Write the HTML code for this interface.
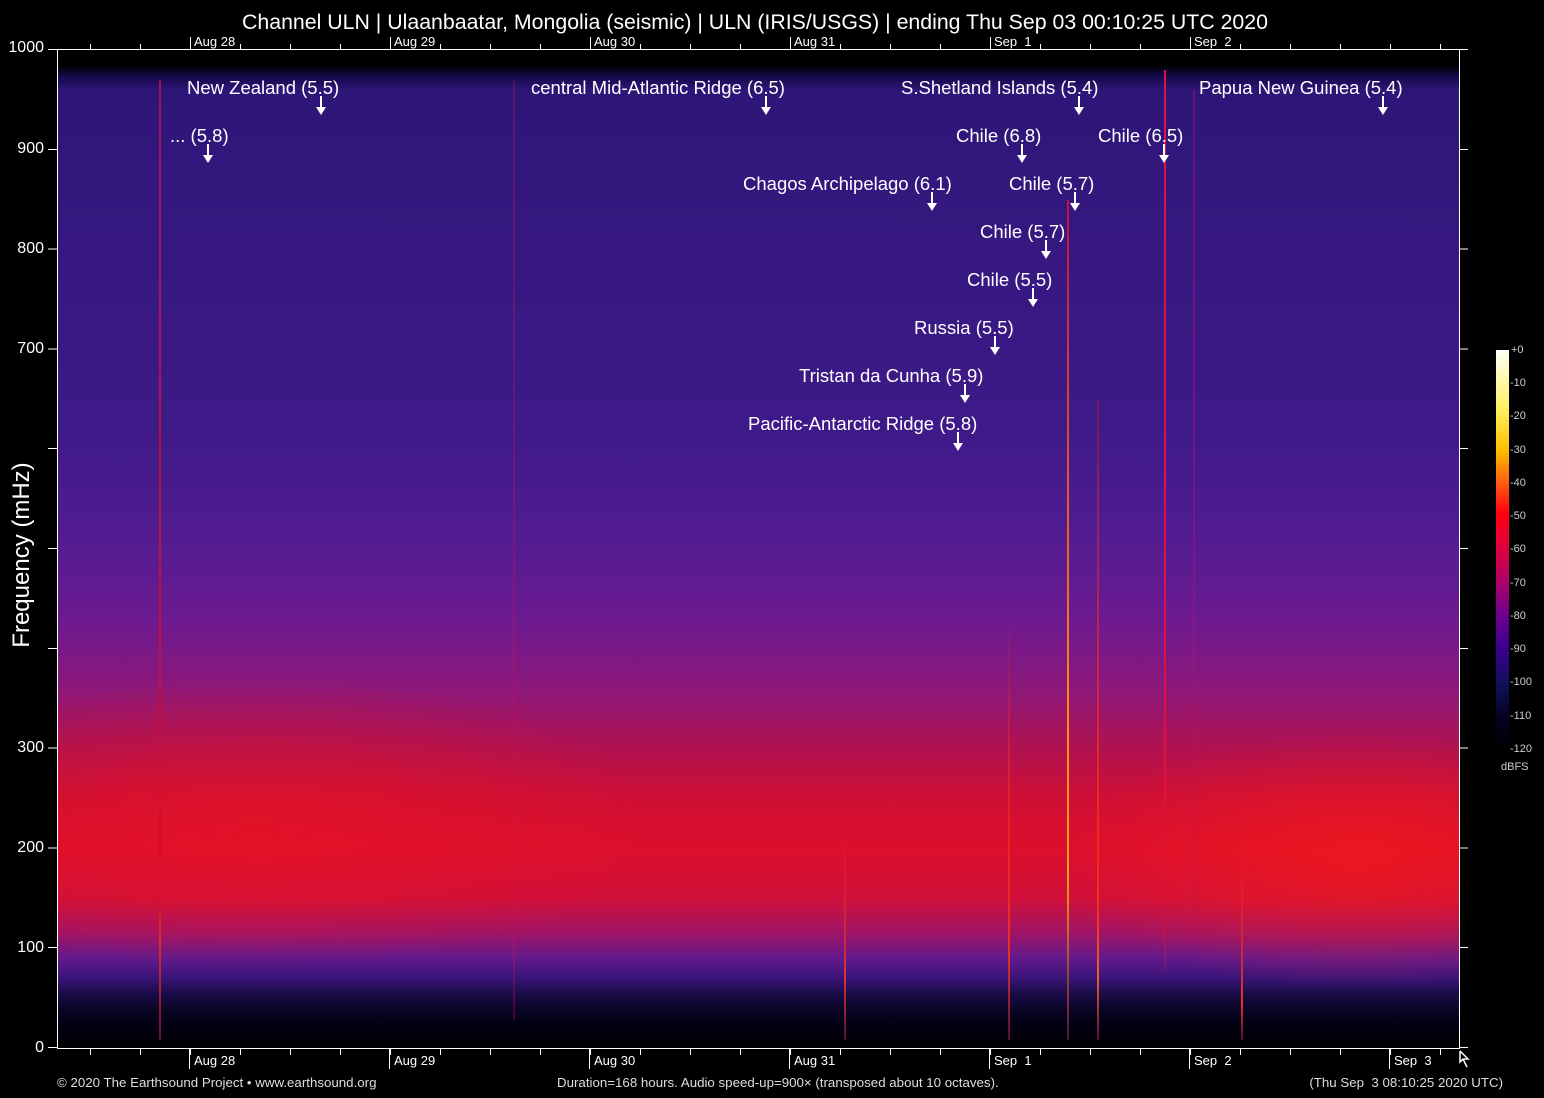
<!DOCTYPE html>
<html><head><meta charset="utf-8"><style>
*{margin:0;padding:0}
body{width:1544px;height:1098px;background:#000;position:relative;overflow:hidden;font-family:"Liberation Sans",Arial,sans-serif;color:#fff}
.a{position:absolute}
#plot{left:57px;top:49px;width:1401px;height:998px;border:1px solid #fff;overflow:hidden;
background:linear-gradient(to bottom,#000 0%,#000 1.5%,#14094a 2.6%,#2e1678 4%,#361880 20%,#3e1a88 38%,#501c90 48%,#6c1a90 57%,#8c187a 64%,#b01250 70%,#cf0f35 75%,#dc0f2c 80%,#d0103a 85%,#a01466 88.5%,#621a8c 91%,#3a1478 93%,#1c0c4a 94.5%,#0a0528 96%,#030114 97.5%,#000 100%)}
.ov{position:absolute}
.st{position:absolute;width:2px}
.an{position:absolute;font-size:18.5px;white-space:nowrap;line-height:20px}
.ar{position:absolute;width:2px;background:#fff}
.ar:after{content:"";position:absolute;left:-4px;bottom:-7px;border-left:5px solid transparent;border-right:5px solid transparent;border-top:8px solid #fff}
.yl{position:absolute;right:1500px;font-size:16px;text-align:right;line-height:16px}
.tl{position:absolute;font-size:13px;line-height:13px}
.cl{position:absolute;left:1510px;font-size:11px;color:#ccc;line-height:11px}
</style></head><body>
<div class="a" style="left:0;width:1510px;top:9px;text-align:center;font-size:21.3px;line-height:26px">Channel ULN | Ulaanbaatar, Mongolia (seismic) | ULN (IRIS/USGS) | ending Thu Sep 03 00:10:25 UTC 2020</div>

<div id="plot" class="a">
 <div class="ov" style="left:-200px;top:620px;width:800px;height:300px;background:radial-gradient(ellipse at center,rgba(235,20,30,.5),rgba(235,20,30,0) 70%)"></div>
 <div class="ov" style="left:1000px;top:680px;width:600px;height:260px;background:radial-gradient(ellipse at center,rgba(250,30,20,.55),rgba(250,30,20,0) 70%)"></div>
 <div class="st" style="left:101px;top:30px;height:960px;background:linear-gradient(#a01060,#d01030 85%,#e03020 90%,#600a40)"></div>
 <div class="st" style="left:455px;top:30px;height:940px;background:rgba(200,20,90,.3)"></div>
 <div class="st" style="left:786px;top:780px;height:210px;background:linear-gradient(rgba(230,40,40,0),#e0302a 70%,#501040)"></div>
 <div class="st" style="left:950px;top:560px;height:430px;background:linear-gradient(rgba(230,40,40,0),#f03020 80%,#501040)"></div>
 <div class="st" style="left:1009px;top:150px;height:840px;background:linear-gradient(#c0104a,#ff8a10 60%,#ffa020 80%,#501040)"></div>
 <div class="st" style="left:1039px;top:350px;height:640px;background:linear-gradient(rgba(230,30,40,.3),#f03020 80%,#f06020 90%,#501040)"></div>
 <div class="st" style="left:1106px;top:20px;height:900px;background:linear-gradient(#e01040,#e01040 80%,rgba(200,20,60,.3))"></div>
 <div class="st" style="left:1183px;top:800px;height:190px;background:linear-gradient(rgba(230,40,40,0),#f03020 80%,#501040)"></div>
 <div class="st" style="left:1135px;top:40px;height:850px;background:rgba(180,20,100,.4)"></div>
</div>

<div class="yl" style="top:40px">1000</div>
<div class="yl" style="top:141px">900</div>
<div class="yl" style="top:241px">800</div>
<div class="yl" style="top:341px">700</div>
<div class="yl" style="top:740px">300</div>
<div class="yl" style="top:840px">200</div>
<div class="yl" style="top:940px">100</div>
<div class="yl" style="top:1040px">0</div>
<div class="a" style="left:48px;top:49px;width:9px;height:1000px;background:repeating-linear-gradient(to bottom,#fff 0,#fff 1px,transparent 1px,transparent 99.8px)"></div>
<div class="a" style="left:1459px;top:49px;width:9px;height:1000px;background:repeating-linear-gradient(to bottom,#fff 0,#fff 1px,transparent 1px,transparent 99.8px)"></div>
<div class="a" style="left:0;top:555px;width:0;height:0"><div style="position:absolute;left:-84px;top:-13px;width:212px;text-align:center;transform:rotate(-90deg);font-size:24px;line-height:26px">Frequency (mHz)</div></div>

<div class="a" style="left:90px;top:44px;width:1360px;height:5px;background:repeating-linear-gradient(to right,#fff 0,#fff 1px,transparent 1px,transparent 50px)"></div>
<div class="a" style="left:90px;top:1049px;width:1360px;height:6px;background:repeating-linear-gradient(to right,#fff 0,#fff 1px,transparent 1px,transparent 50px)"></div>
<div class="a" style="left:190px;top:37px;width:1px;height:12px;background:#fff"></div><div class="tl" style="left:194px;top:35px">Aug 28</div>
<div class="a" style="left:390px;top:37px;width:1px;height:12px;background:#fff"></div><div class="tl" style="left:394px;top:35px">Aug 29</div>
<div class="a" style="left:590px;top:37px;width:1px;height:12px;background:#fff"></div><div class="tl" style="left:594px;top:35px">Aug 30</div>
<div class="a" style="left:790px;top:37px;width:1px;height:12px;background:#fff"></div><div class="tl" style="left:794px;top:35px">Aug 31</div>
<div class="a" style="left:990px;top:37px;width:1px;height:12px;background:#fff"></div><div class="tl" style="left:994px;top:35px">Sep &nbsp;1</div>
<div class="a" style="left:1190px;top:37px;width:1px;height:12px;background:#fff"></div><div class="tl" style="left:1194px;top:35px">Sep &nbsp;2</div>
<div class="a" style="left:189px;top:1049px;width:1px;height:20px;background:#fff"></div><div class="tl" style="left:194px;top:1054px">Aug 28</div>
<div class="a" style="left:389px;top:1049px;width:1px;height:20px;background:#fff"></div><div class="tl" style="left:394px;top:1054px">Aug 29</div>
<div class="a" style="left:589px;top:1049px;width:1px;height:20px;background:#fff"></div><div class="tl" style="left:594px;top:1054px">Aug 30</div>
<div class="a" style="left:789px;top:1049px;width:1px;height:20px;background:#fff"></div><div class="tl" style="left:794px;top:1054px">Aug 31</div>
<div class="a" style="left:989px;top:1049px;width:1px;height:20px;background:#fff"></div><div class="tl" style="left:994px;top:1054px">Sep &nbsp;1</div>
<div class="a" style="left:1189px;top:1049px;width:1px;height:20px;background:#fff"></div><div class="tl" style="left:1194px;top:1054px">Sep &nbsp;2</div>
<div class="a" style="left:1389px;top:1049px;width:1px;height:20px;background:#fff"></div><div class="tl" style="left:1394px;top:1054px">Sep &nbsp;3</div>
<svg class="a" style="left:1456px;top:1050px" width="16" height="22"><path d="M4 1 L4 12 L7 9 L11 17 M4 1 L12 9 L8 9" stroke="#fff" stroke-width="1.5" fill="none"/></svg>

<div class="an" style="left:187px;top:78px">New Zealand (5.5)</div><div class="ar" style="left:320px;top:96px;height:12px"></div>
<div class="an" style="left:170px;top:126px">... (5.8)</div><div class="ar" style="left:207px;top:144px;height:12px"></div>
<div class="an" style="left:531px;top:78px">central Mid-Atlantic Ridge (6.5)</div><div class="ar" style="left:765px;top:96px;height:12px"></div>
<div class="an" style="left:901px;top:78px">S.Shetland Islands (5.4)</div><div class="ar" style="left:1078px;top:96px;height:12px"></div>
<div class="an" style="left:1199px;top:78px">Papua New Guinea (5.4)</div><div class="ar" style="left:1382px;top:96px;height:12px"></div>
<div class="an" style="left:956px;top:126px">Chile (6.8)</div><div class="ar" style="left:1021px;top:144px;height:12px"></div>
<div class="an" style="left:1098px;top:126px">Chile (6.5)</div><div class="ar" style="left:1163px;top:144px;height:12px"></div>
<div class="an" style="left:743px;top:174px">Chagos Archipelago (6.1)</div><div class="ar" style="left:931px;top:192px;height:12px"></div>
<div class="an" style="left:1009px;top:174px">Chile (5.7)</div><div class="ar" style="left:1074px;top:192px;height:12px"></div>
<div class="an" style="left:980px;top:222px">Chile (5.7)</div><div class="ar" style="left:1045px;top:240px;height:12px"></div>
<div class="an" style="left:967px;top:270px">Chile (5.5)</div><div class="ar" style="left:1032px;top:288px;height:12px"></div>
<div class="an" style="left:914px;top:318px">Russia (5.5)</div><div class="ar" style="left:994px;top:336px;height:12px"></div>
<div class="an" style="left:799px;top:366px">Tristan da Cunha (5.9)</div><div class="ar" style="left:964px;top:384px;height:12px"></div>
<div class="an" style="left:748px;top:414px">Pacific-Antarctic Ridge (5.8)</div><div class="ar" style="left:957px;top:432px;height:12px"></div>

<div class="a" style="left:1496px;top:350px;width:13px;height:398px;background:linear-gradient(to bottom,#fffff8 0%,#fff060 15%,#ffc000 25%,#ff6010 33%,#ff0010 41%,#e00040 50%,#a00070 60%,#6a0090 67%,#3a0090 75%,#10105a 84%,#050225 92%,#000 100%)"></div>
<div class="cl" style="left:1511px;top:345px">+0</div>
<div class="cl" style="top:378px">-10</div>
<div class="cl" style="top:411px">-20</div>
<div class="cl" style="top:445px">-30</div>
<div class="cl" style="top:478px">-40</div>
<div class="cl" style="top:511px">-50</div>
<div class="cl" style="top:544px">-60</div>
<div class="cl" style="top:578px">-70</div>
<div class="cl" style="top:611px">-80</div>
<div class="cl" style="top:644px">-90</div>
<div class="cl" style="top:677px">-100</div>
<div class="cl" style="top:711px">-110</div>
<div class="cl" style="top:744px">-120</div>
<div class="cl" style="left:1501px;top:762px">dBFS</div>

<div class="a" style="left:57px;top:1075px;font-size:13.3px;color:#ddd">© 2020 The Earthsound Project • www.earthsound.org</div>
<div class="a" style="left:557px;top:1075px;font-size:13.3px;color:#ddd">Duration=168 hours. Audio speed-up=900× (transposed about 10 octaves).</div>
<div class="a" style="right:41px;top:1075px;font-size:13.3px;color:#ddd">(Thu Sep &nbsp;3 08:10:25 2020 UTC)</div>
</body></html>
